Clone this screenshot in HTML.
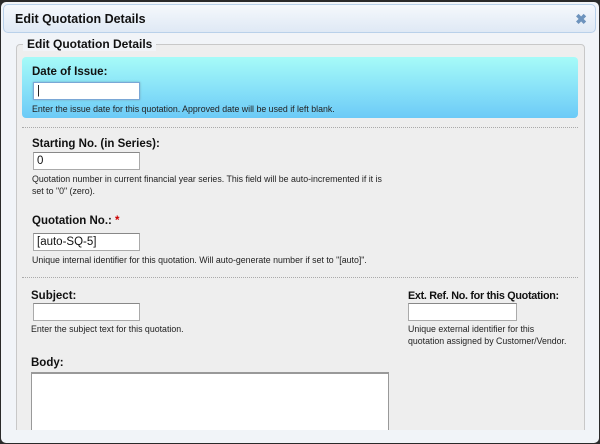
<!DOCTYPE html>
<html><head><style>
*{margin:0;padding:0;box-sizing:border-box}
body{width:600px;height:444px;background:#2a2a2a;position:relative;overflow:hidden;font-family:"Liberation Sans",Arial,sans-serif;color:#111}
.dlg{position:absolute;left:1px;top:2px;width:598px;height:441px;background:#f1f4f8;border-radius:5px}
.hdr{position:absolute;left:3px;top:4px;width:593px;height:29px;border:1px solid #b9d1ea;border-radius:5px;background:linear-gradient(#f5f8fc,#dfe9f5)}
.hdr span{position:absolute;left:11px;top:7px;font-weight:bold;font-size:12.5px}
.x{position:absolute;right:8px;top:6px;color:#6d93bd;font-weight:bold;font-size:14px}
.fs{position:absolute;left:16px;top:44px;width:569px;height:390px;border:1px solid #c8c8c8;border-radius:4px;background:#eeeeee}
.lg{position:absolute;left:23px;top:37px;padding:0 4px;background:#f1f4f8;font-weight:bold;font-size:12px}
.cy{position:absolute;left:22px;top:57px;width:556px;height:61px;border-radius:4px;background:linear-gradient(#a6fbf8,#6ccaf7)}
.l{position:absolute;font-weight:bold;font-size:11.5px}
.i{position:absolute;height:18px;background:#fff;border:1px solid #aaa;border-top-color:#888;font-size:11.5px;padding:2px 3px;line-height:13px}
.h{position:absolute;font-size:8.8px;line-height:12px;color:#222}
.dot{position:absolute;left:22px;width:556px;border-top:1px dotted #aaa}
</style></head><body>
<div class="dlg"></div>
<div class="hdr"><span>Edit Quotation Details</span><div class="x">✖</div></div>
<div class="fs"></div>
<div class="lg">Edit Quotation Details</div>
<div class="cy"></div>
<div class="l" style="left:32px;top:66px">Date of Issue:</div>
<div class="i" style="left:33px;top:82px;width:107px;border:1px solid #7aa7d6;box-shadow:0 0 2px #7ab">|</div>
<div class="h" style="left:32px;top:103px">Enter the issue date for this quotation. Approved date will be used if left blank.</div>
<div class="dot" style="top:127px"></div>
<div class="l" style="left:32px;top:138px">Starting No. (in Series):</div>
<div class="i" style="left:33px;top:152px;width:107px">0</div>
<div class="h" style="left:32px;top:173px">Quotation number in current financial year series. This field will be auto-incremented if it is<br>set to "0" (zero).</div>
<div class="l" style="left:32px;top:215px">Quotation No.: <span style="color:#c00">*</span></div>
<div class="i" style="left:33px;top:233px;width:107px">[auto-SQ-5]</div>
<div class="h" style="left:32px;top:254px">Unique internal identifier for this quotation. Will auto-generate number if set to "[auto]".</div>
<div class="dot" style="top:277px"></div>
<div class="l" style="left:31px;top:290px">Subject:</div>
<div class="i" style="left:33px;top:303px;width:107px"></div>
<div class="h" style="left:31px;top:323px">Enter the subject text for this quotation.</div>
<div class="l" style="left:408px;top:290px;font-size:10.8px;letter-spacing:-0.3px">Ext. Ref. No. for this Quotation:</div>
<div class="i" style="left:408px;top:303px;width:109px"></div>
<div class="h" style="left:408px;top:323px">Unique external identifier for this<br>quotation assigned by Customer/Vendor.</div>
<div class="l" style="left:31px;top:357px">Body:</div>
<div class="i" style="left:31px;top:372px;width:358px;height:70px;border:1px solid #999;border-top:2px solid #999"></div>
<div style="position:absolute;left:1px;top:430px;width:598px;height:12px;background:#f1f4f8;border-radius:0 0 5px 5px"></div>
</body></html>
